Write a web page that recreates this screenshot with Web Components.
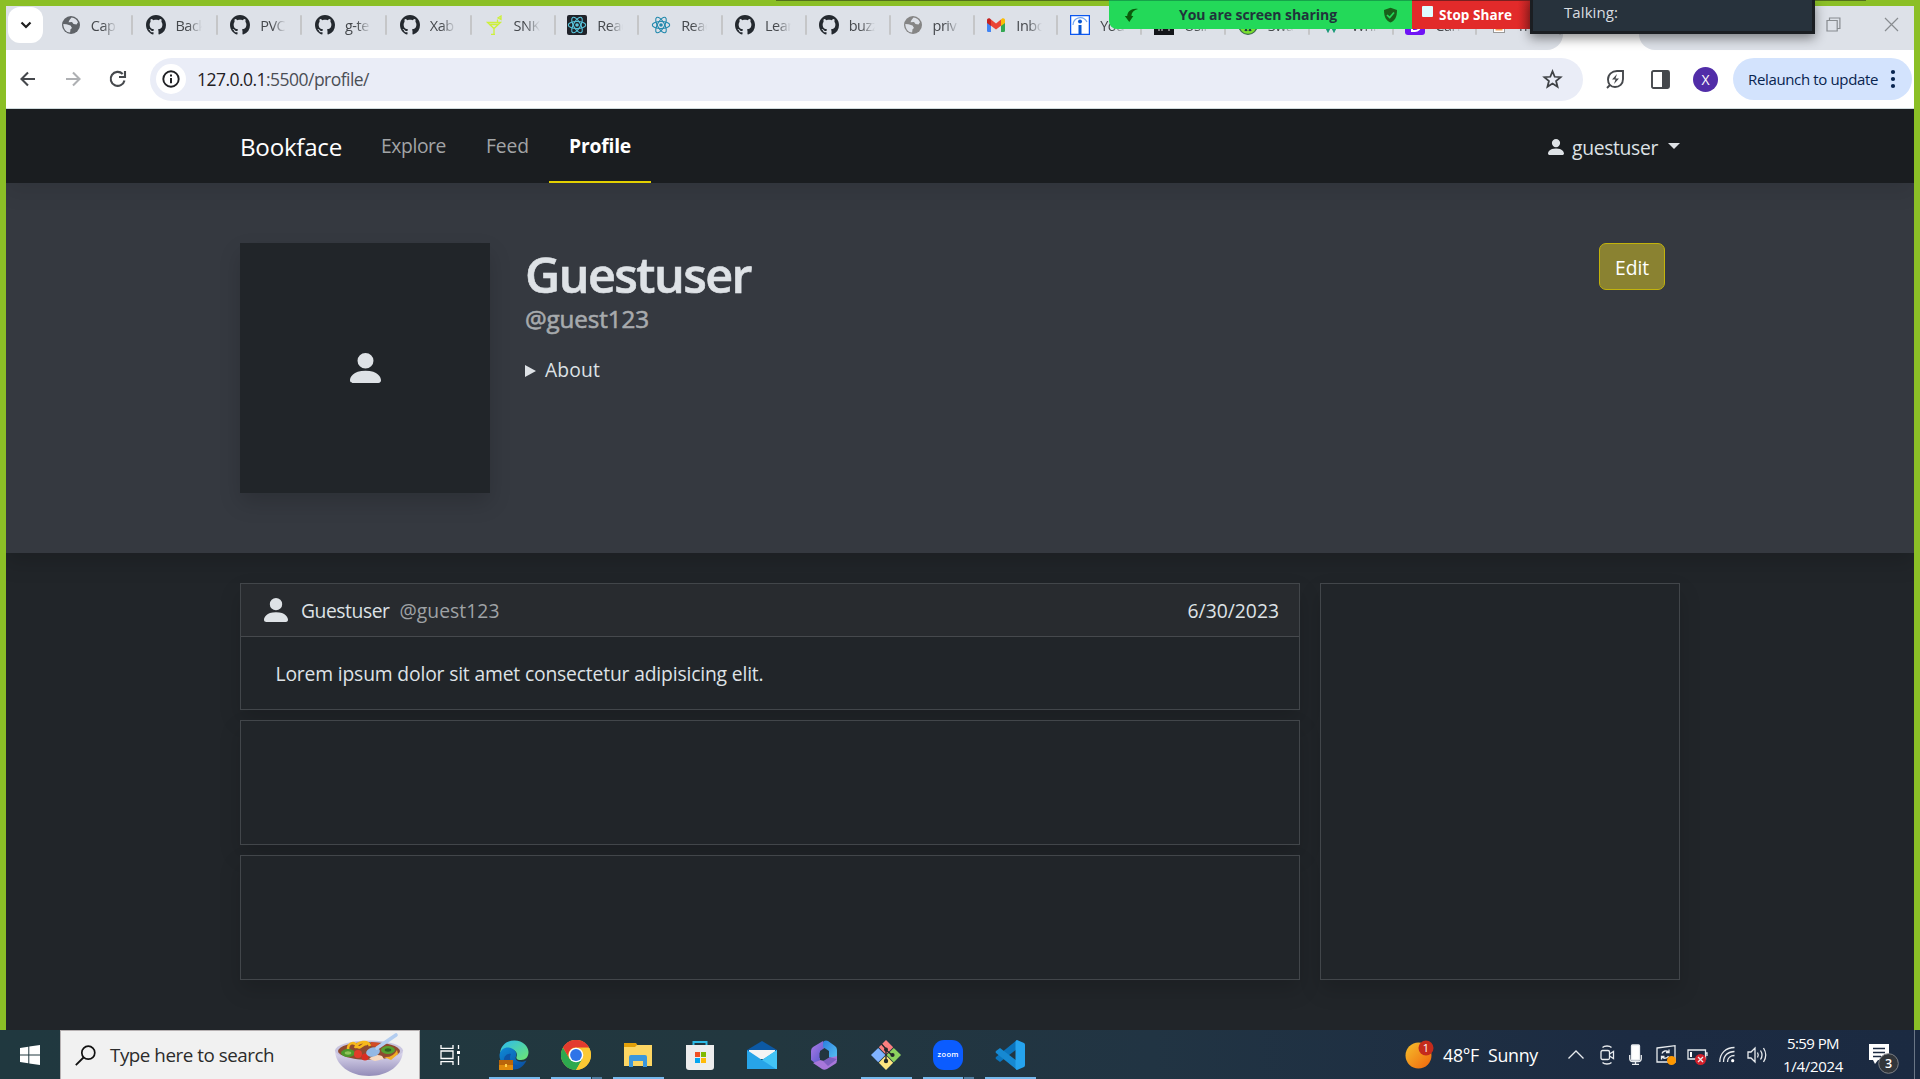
<!DOCTYPE html>
<html lang="en">
<head>
<meta charset="utf-8">
<title>Bookface - Profile</title>
<style>
html,body{margin:0;height:100%;overflow:hidden}
body{font-family:"Open Sans","Noto Sans",sans-serif;background:#212529}
</style>
</head>
<body>
<desk-top></desk-top>
<script>
const make = (name, html, after) => {
  const t = document.createElement('template');
  t.innerHTML = html;
  customElements.define(name, class extends HTMLElement {
    constructor() { super(); this.attachShadow({mode: 'open'}).append(t.content.cloneNode(true)); }
    connectedCallback() { if (after) after(this, this.shadowRoot); }
  });
};

make('desk-top', `
<style>:host{display:flex;flex-direction:column;width:1920px;height:1079px;position:relative;overflow:hidden}</style>
<browser-window></browser-window>
<task-bar></task-bar>
<share-overlay></share-overlay>`);

make('browser-window', `
<style>:host{display:flex;flex-direction:column;box-sizing:border-box;height:1030px;border:6px solid #8bbf26;border-bottom:0;background:#212529;overflow:hidden}</style>
<tab-strip></tab-strip><tool-bar></tool-bar><profile-page></profile-page>`);

/* Tab strip */
make('tab-strip', `
<style>
:host{display:flex;height:44px;background:#fff;flex:none}
.l{width:1557px;display:flex;background:#dde1e8;border-radius:0 0 16px 0;overflow:hidden}
.drop{width:35px;height:36px;margin:1px 5px 0 2px;background:#fff;border-radius:12px;display:grid;place-items:center;flex:none}
chrome-tab:nth-of-type(-n+5){width:84.750px}
.gap{width:76px;flex:none}
.r{width:275px;display:flex;justify-content:flex-end;align-items:flex-start;background:#dde1e8;border-radius:0 0 0 16px}
.r svg{margin-top:11px;fill:none;stroke:#888c90;stroke-width:1.2}
.a{margin-right:43px}.b{margin-right:15px}
</style>
<div class="l"><div class="drop"><svg width="12" height="8" viewBox="0 0 12 8"><path d="M1.5 1.5 6 6l4.500-4.500" fill="none" stroke="#1f1f1f" stroke-width="2.200"/></svg></div>
<chrome-tab icon="globe">Cap</chrome-tab><chrome-tab icon="github">Back</chrome-tab><chrome-tab icon="github">PVC</chrome-tab><chrome-tab icon="github">g-te</chrome-tab><chrome-tab icon="github">Xab</chrome-tab><chrome-tab icon="drink">SNK</chrome-tab><chrome-tab icon="reactd">Reac</chrome-tab><chrome-tab icon="react">Reac</chrome-tab><chrome-tab icon="github">Lear</chrome-tab><chrome-tab icon="github">buzz</chrome-tab><chrome-tab icon="globe2">priv</chrome-tab><chrome-tab icon="gmail">Inbo</chrome-tab><chrome-tab icon="info">You</chrome-tab><chrome-tab icon="black">Usin</chrome-tab><chrome-tab icon="lime">Swa</chrome-tab><chrome-tab icon="teal">Whit</chrome-tab><chrome-tab icon="purple">Can</chrome-tab><chrome-tab icon="photo">m</chrome-tab></div>
<div class="gap"></div>
<div class="r"><svg class="a" width="15" height="15" viewBox="0 0 15 15"><path d="M1 3.500h10.200V14H1zM3.500 3.500V1h10.400v10.500h-2.500"/></svg><svg class="b" width="15" height="15" viewBox="0 0 15 15"><path d="m1 1 13 13M14 1 1 14"/></svg></div>`);

const globe = c => `<svg viewBox="0 0 20 20"><circle cx="10" cy="10" r="9" fill="${c}"/><path d="M10.500 2.500c3 .2 5.500 2.200 6.500 4.800l-1.500 2.200-3-.5-1.500-2-3.500.3 1-2.300zM2.300 9l3.200.2 4 1.300 1.500 2.500-1.500 1.200-.4 3.300C5.500 17.500 2.300 14 2.300 9z" fill="#dde1e8"/></svg>`;
const atom = c => `<g fill="none" stroke="${c}" stroke-width="1.100"><ellipse cx="10" cy="10" rx="8.700" ry="3.500"/><ellipse cx="10" cy="10" rx="8.700" ry="3.500" transform="rotate(60 10 10)"/><ellipse cx="10" cy="10" rx="8.700" ry="3.500" transform="rotate(120 10 10)"/></g><circle cx="10" cy="10" r="1.800" fill="${c}"/>`;
const favicons = {
  globe: globe('#5f6368'), globe2: globe('#858585'),
  github: `<svg viewBox="0 0 16 16"><path fill="#24292f" d="M8 0C3.580 0 0 3.580 0 8c0 3.540 2.290 6.530 5.470 7.590.4.070.55-.17.55-.38 0-.19-.01-.82-.01-1.490-2.010.37-2.530-.49-2.690-.94-.09-.23-.48-.94-.82-1.130-.28-.15-.68-.52-.01-.53.63-.01 1.080.58 1.230.82.72 1.210 1.870.87 2.330.66.07-.52.28-.87.51-1.070-1.780-.2-3.640-.89-3.640-3.950 0-.87.31-1.590.82-2.150-.08-.2-.36-1.020.08-2.120 0 0 .67-.21 2.200.82.64-.18 1.320-.27 2-.27s1.360.09 2 .27c1.530-1.040 2.200-.82 2.200-.82.44 1.100.16 1.920.08 2.120.51.56.82 1.270.82 2.150 0 3.070-1.870 3.750-3.650 3.950.29.25.54.73.54 1.480 0 1.070-.01 1.930-.01 2.200 0 .21.15.46.55.38A8.010 8.010 0 0 0 16 8c0-4.420-3.580-8-8-8z"/></svg>`,
  drink: `<svg viewBox="0 0 20 20"><g fill="none" stroke="#cdf03c" stroke-width="1.300"><path d="M3.500 7.500h13L10 13.500zM10 13.500V19M7 19.500h4M5 9.500h9M13.500 7.500v-3M17 1l-3 2 3 1.500z"/></g></svg>`,
  reactd: `<svg viewBox="0 0 20 20"><rect width="20" height="20" rx="2" fill="#20232a"/>${atom('#58c4dc')}</svg>`,
  react: `<svg viewBox="0 0 20 20">${atom('#2289ad')}</svg>`,
  gmail: `<svg viewBox="0 0 20 20"><path fill="#4285f4" d="M1 7.500 5 10v7H2.300A1.300 1.300 0 0 1 1 15.700z"/><path fill="#34a853" d="M19 7.500 15 10v7h2.700a1.300 1.300 0 0 0 1.300-1.300z"/><path fill="#ea4335" d="M5 4.500v6.300l5 3.700 5-3.700V4.500l-5 3.900z"/><path fill="#c5221f" d="M1 5v3l4 3V4.500l-.8-.7C2.800 2.700 1 3.600 1 5z"/><path fill="#fbbc04" d="M19 5v3l-4 3V4.500l.8-.7C17.200 2.700 19 3.600 19 5z"/></svg>`,
  info: `<svg viewBox="0 0 20 20"><rect x=".6" y=".6" width="18.800" height="18.800" fill="#fff" stroke="#0b57f0" stroke-width="1.300"/><circle cx="10" cy="6.500" r="2" fill="#0b57d0"/><path d="M8.500 10h3v9h-3z" fill="#0b57d0"/><path d="M3 10c.5-8 10-10 14-3" fill="none" stroke="#79a9ef" stroke-width="1.200"/></svg>`,
  black: `<svg viewBox="0 0 20 20"><path fill="#14161a" d="M0 0h20v20H0z"/><path d="M5 12v4m3-4v4m7-4v4" stroke="#ddd"/></svg>`,
  lime: `<svg viewBox="0 0 20 20"><circle cx="10" cy="10" r="9.300" fill="#79e02d" stroke="#3b6b4c" stroke-width="1.200"/><path d="m7 16 1-2 1 2m2 0 1-2 1 2" stroke="#173647" fill="none" stroke-width="1.300"/></svg>`,
  teal: `<svg viewBox="0 0 20 20"><path d="m3 10 3 6 3-6 3 6 3-6" fill="none" stroke="#1c9b79" stroke-width="2"/></svg>`,
  purple: `<svg viewBox="0 0 20 20"><rect width="20" height="20" rx="3" fill="#6f13f5"/><path d="M7 5h3a5 5 0 0 1 0 11H7z" fill="none" stroke="#fff" stroke-width="2"/></svg>`,
  photo: `<svg viewBox="0 0 20 20"><rect x="4.500" y="3" width="11" height="14.500" fill="#fff" stroke="#999"/><path d="M6.500 8h7v7.500h-7z" fill="#f49b54"/></svg>`
};
make('chrome-tab', `
<style>
:host{display:flex;align-items:center;justify-content:flex-end;box-sizing:border-box;width:83.800px;height:38px;flex:none;font-size:14.500px;line-height:20px;color:#45484c}
.i{width:20px;height:20px;flex:none}.i svg{display:block;width:20px;height:20px}
.t{width:26px;margin:1px 14px 0 10px;white-space:nowrap;overflow:hidden;letter-spacing:-.5px;-webkit-mask:linear-gradient(90deg,#000 45%,transparent);mask:linear-gradient(90deg,#000 45%,transparent);flex:none}
.s{width:2px;height:20px;background:#c5c6c8;border-radius:1px;flex:none}
</style>
<span class="i"></span><span class="t"><slot></slot></span><span class="s"></span>`,
(h, r) => { r.querySelector('.i').innerHTML = favicons[h.getAttribute('icon')]; });

/* Toolbar */
make('tool-bar', `
<style>
:host{display:flex;align-items:center;height:59px;box-sizing:border-box;border-bottom:1px solid #d0dbdd;background:#fff;flex:none;padding-left:12px}
svg{display:block;flex:none}
.n{width:20px;margin-right:25px}.n3{margin-right:22px}
.omni{width:1433px;height:43px;border-radius:22px;background:#eaedf7;display:flex;align-items:center;box-sizing:border-box;padding:0 20px 0 6px;margin-right:21px;flex:none}
.c{width:30px;height:30px;border-radius:50%;background:#fff;display:grid;place-items:center;margin-right:11px}
.u{font-size:17.500px;line-height:24px;color:#4b4e55;flex:1}.u b{font-weight:400;color:#1f2023}
.av{width:25px;height:25px;border-radius:50%;background:#512da8;color:#fff;font-size:14px;line-height:25px;text-align:center;margin:0 15px 0 23px;flex:none}
.pill{width:179px;height:42px;border-radius:21px;background:#d3e3fd;display:flex;align-items:center;box-sizing:border-box;padding:0 13px 0 15px;justify-content:space-between;color:#08244f;font-size:15px;line-height:22px;flex:none}
.sp{width:25px;flex:none}
</style>
<svg class="n" width="20" height="20" viewBox="0 0 20 20"><path d="M17 10H4M10 3.500 3.500 10l6.500 6.500" fill="none" stroke="#45484c" stroke-width="2.100"/></svg>
<svg class="n" width="20" height="20" viewBox="0 0 20 20"><path d="M3 10h13M10 3.500l6.500 6.500-6.500 6.500" fill="none" stroke="#aeb0b3" stroke-width="2.100"/></svg>
<svg class="n n3" width="20" height="20" viewBox="0 0 20 20"><path d="M16.500 11.500A7 7 0 1 1 14.700 5M17 2v6h-6" fill="none" stroke="#45484c" stroke-width="2.100"/></svg>
<div class="omni"><div class="c"><svg width="20" height="20" viewBox="0 0 20 20"><circle cx="10" cy="10" r="7.700" fill="none" stroke="#202124" stroke-width="1.900"/><path d="M10 9v5.200M10 5.500v2" stroke="#202124" stroke-width="2"/></svg></div>
<div class="u"><fit-text w="172"><b>127.0.0.1</b>:5500/profile/</fit-text></div>
<svg width="21" height="21" viewBox="0 0 20 20"><path d="m10 2.200 2.100 5.200 5.600.4-4.300 3.600 1.400 5.500L10 13.900l-4.800 3 1.400-5.500L2.300 7.800l5.600-.4z" fill="none" stroke="#3f4246" stroke-width="1.700"/></svg></div>
<svg width="22" height="22" viewBox="0 0 22 22"><path d="M19 3v8c0 5-3.500 8-8 8-4.300 0-7-3-7-7.500C4 6.300 8 3.200 13 3zM6 17l-3 3" fill="none" stroke="#45484c" stroke-width="1.900"/><path d="m13 6-5 5.500h3.500L10 16l5-5.500h-3.500z" fill="#45484c"/></svg>
<div class="sp"></div>
<svg width="19" height="19" viewBox="0 0 19 19"><rect x="1" y="1" width="17" height="17" rx="1.500" fill="#fff" stroke="#45484c" stroke-width="1.900"/><path d="M11 1h7v17h-7z" fill="#45484c"/></svg>
<div class="av">X</div>
<div class="pill"><fit-text w="130">Relaunch to update</fit-text><svg width="12" height="20" viewBox="0 0 12 20" fill="#08244f"><circle cx="6" cy="3" r="2.100"/><circle cx="6" cy="10" r="2.100"/><circle cx="6" cy="17" r="2.100"/></svg></div>`);

/* Profile page */
make('profile-page', `
<style>:host{display:block;flex:1;background:#212529;color:#dee2e6;overflow:hidden;font-size:19.300px;line-height:30px}
.main{display:flex;gap:20px;padding:30px 234px 0;align-items:stretch;height:397px}
.feed{display:flex;flex-direction:column;gap:10px;width:1060px}
</style>
<nav-bar></nav-bar>
<profile-hero></profile-hero>
<div class="main"><div class="feed"><post-card><fit-text w="488">Lorem ipsum dolor sit amet consectetur adipisicing elit.</fit-text></post-card><blank-card style="height:125px"></blank-card><blank-card style="height:125px"></blank-card></div><blank-card style="width:360px;height:397px"></blank-card></div>`);

make('user-icon', `
<style>:host{display:inline-block;width:24px;height:24px;flex:none}svg{display:block;width:100%;height:100%}</style>
<svg viewBox="1.500 1 13 13" preserveAspectRatio="none"><path fill="#dee2e6" d="M2.700 14s-1.200 0-1.200-1.200S2.700 8.700 8 8.700s6.500 2.900 6.500 4.100S13.300 14 13.300 14zM8 7.700A3.350 3.350 0 1 0 8 1a3.350 3.350 0 0 0 0 6.700z"/></svg>`);

make('nav-bar', `
<style>
:host{display:flex;align-items:center;height:74px;background:#1a1d20;padding:0 234px;position:relative;z-index:2;box-shadow:0 10px 20px rgba(0,0,0,.08)}
.brand{font-size:24.200px;color:#fff;margin-right:19px;padding-top:1px}
nav{display:flex;height:74px;line-height:74px;color:#a2a4a6}
nav span{padding:0 20px;box-sizing:border-box}
nav .on{color:#fff;font-weight:700;border-bottom:2px solid #e3d000;width:102px}
.user{margin-left:auto;display:flex;align-items:center;padding-top:2px}
.user fit-text{margin-top:1px}
user-icon{width:16px;height:16px;margin-right:8px}
.car{border:6px solid transparent;border-top-color:#dee2e6;border-bottom:0;margin:-3px 0 0 10px}
</style>
<div class="brand"><fit-text w="102">Bookface</fit-text></div>
<nav><span><fit-text w="65">Explore</fit-text></span><span><fit-text w="43">Feed</fit-text></span><span class="on"><fit-text w="62">Profile</fit-text></span></nav>
<div class="user"><user-icon></user-icon><fit-text w="86">guestuser</fit-text><i class="car"></i></div>`);

make('profile-hero', `
<style>
:host{display:flex;align-items:flex-start;height:370px;box-sizing:border-box;padding:60px 234px;background:#353940;position:relative;box-shadow:0 10px 20px rgba(0,0,0,.15)}
.pic{width:250px;height:250px;background:#212529;box-shadow:0 10px 20px rgba(0,0,0,.15);display:grid;place-items:center;margin-right:35px}
.pic user-icon{width:31px;height:30px}
h1{font-size:48.500px;line-height:60px;font-weight:600;-webkit-text-stroke:.6px #dee2e6;margin:1px 0 0}
h4{font-size:24.200px;line-height:30px;font-weight:400;-webkit-text-stroke:.6px #a7aaad;margin:0;color:#a7aaad}
.about{margin-top:21px;display:flex;align-items:center}
.tri{border:6.500px solid transparent;border-left:11px solid #dee2e6;border-right:0;margin:1px 9px 0 0}
.edit{margin:0 15px 0 auto;width:66px;height:47px;box-sizing:border-box;border:1px solid #c2b30c;border-radius:7px;background:#8a8231;color:#fff;line-height:48px;text-align:center}
</style>
<div class="pic"><user-icon></user-icon></div>
<div><h1><fit-text w="226">Guestuser</fit-text></h1><h4><fit-text w="124">@guest123</fit-text></h4><div class="about"><i class="tri"></i><fit-text w="55">About</fit-text></div></div>
<div class="edit"><fit-text w="34">Edit</fit-text></div>`);

make('blank-card', `
<style>:host{display:block;box-sizing:border-box;border:1px solid #42464a;background:#212529;box-shadow:0 10px 20px rgba(0,0,0,.15);flex:none}</style><slot></slot>`);

make('post-card', `
<style>
:host{display:block;box-sizing:border-box;height:127px;border:1px solid #42464a;background:#212529;box-shadow:0 10px 20px rgba(0,0,0,.15);flex:none}
header{display:flex;align-items:center;height:52px;padding:0 20px 0 23px;background:#282b2f;border-bottom:1px solid #46494d}
.n{margin:2px 10px 0 13px}.h{color:#9fa2a5;margin-top:2px}.d{margin:2px 0 0 auto}
.b{padding:0 34.500px;line-height:74px}
</style>
<header><user-icon></user-icon><fit-text class="n" w="88.500">Guestuser</fit-text><fit-text class="h" w="100">@guest123</fit-text><fit-text class="d" w="91.500">6/30/2023</fit-text></header>
<div class="b"><slot></slot></div>`);

/* Screen-share overlay */
make('share-overlay', `
<style>
:host{position:absolute;left:776px;top:0;width:1090px;height:34px;box-sizing:border-box;border-top:1px solid #55701c;padding-left:333px;display:flex;align-items:flex-start;font-weight:700}
.g{width:303px;background:#23d959;border-radius:0 0 0 8px;display:flex;align-items:center;box-sizing:border-box;padding:0 14px 0 15px;color:#20343b;font-size:14px;line-height:28px;border-top:1px solid #16a34a;margin-top:-1px;height:29px}
.g fit-text{margin:0 auto 0 40px}
.r{width:118px;height:29px;margin-top:-1px;border-top:1px solid #7a1f1f;box-sizing:border-box;background:linear-gradient(90deg,#e22a2a 90%,#b92424);display:flex;padding:5px 0 0 10px;color:#fff;font-size:13.500px;line-height:18px}
.r i{width:11px;height:11px;background:#dffcff;border-radius:1px;margin-right:6px}
.t{width:285px;height:34px;box-sizing:border-box;margin-top:-1px;border:3px solid #1b1e22;border-top:0;background:#27323c;color:#d9dde0;font-weight:400;font-size:15px;line-height:24px;padding-left:31px;box-shadow:0 4px 12px rgba(0,0,0,.45)}
</style>
<div class="g"><svg width="15" height="15" viewBox="0 0 15 15"><path d="M14 1C8 0 3.500 3 3.200 8L.8 8l4.500 6 4-6H7.500C7.500 4.500 10 2 14 1z" fill="#0b5a0b"/></svg><fit-text w="158">You are screen sharing</fit-text><svg width="15" height="16" viewBox="0 0 15 16"><path d="M7.500.8 14 3c0 7-2 10.500-6.500 12.500C3 13.500 1 10 1 3z" fill="#195f1a"/><path d="m4 8 2.700 2.500L11 5.500" stroke="#23d959" stroke-width="1.700" fill="none"/></svg></div>
<div class="r"><i></i><fit-text w="73">Stop Share</fit-text></div>
<div class="t"><fit-text w="54">Talking:</fit-text></div>`);

/* Taskbar */
const G = (id, a, b) => `<linearGradient id="${id}" x1="0" y1="0" x2="1" y2="1"><stop stop-color="${a}"/><stop offset="1" stop-color="${b}"/></linearGradient>`;
const apps = {
  edge: `<defs>${G('a', '#2bb9f2', '#6ee86f')}${G('b', '#0f8ad8', '#0a4a9c')}</defs><path d="M1 13C2 5 8 .5 15.500.5 24 .5 29.500 6.500 29.500 12c0 5-3 8-7.500 8-3.500 0-5-1-4.500-3 2-6-4-9-9-7-4 1-7 2-7.500 3z" fill="url(#a)"/><path d="M.5 15c1-7 8-9 12.500-6.500 4 2 5 5 4 8-2 4 4 7 10.500 4-3 6-7.500 9-12.500 9C6 29.500.5 23 .5 15z" fill="url(#b)"/><path d="M12 14c-3 5 1 12 9 12-7 5-14 2-16-4-1-5 3-9 7-8z" fill="#0d55a8"/><path d="M0 20h14v10H0z" fill="#e08a0c"/><path d="M0 20h14v5H0z" fill="#b9650b"/><path d="M6 24h2v3H6z" fill="#ffd04a"/>`,
  chrome: `<circle cx="15" cy="15" r="15" fill="#fbc02d"/><path d="M2 7.500A15 15 0 0 0 15 30l6.500-11.300L8.500 18.700z" fill="#2da94f"/><path d="M15 30l6.500-11.300L21.500 8H28.300A15 15 0 0 1 15 30z" fill="#fbc934"/><path d="M2 7.500 8.600 19A7.400 7.400 0 0 1 15 7.500h13.100A15 15 0 0 0 2 7.500z" fill="#e33b2e"/><circle cx="15" cy="15" r="7.300" fill="#fff"/><circle cx="15" cy="15" r="5.900" fill="#2f74e8"/>`,
  folder: `<path d="M1 3h12l2 3h11v6H1z" fill="#e3a008"/><path d="M1 7h11l2-2h15v21H1z" fill="#fdd663"/><path d="M6 27V17q0-2 2-2h14q2 0 2 2v10h-4v-6h-10v6z" fill="#3c97dc"/>`,
  store: `<path d="M8.500 7V2h13v5" fill="none" stroke="#2ebbe6" stroke-width="2"/><path d="M1 5h28v22q0 3-3 3H4q-3 0-3-3z" fill="#ededed"/><path d="M10 12h5v5h-5z" fill="#f05125"/><path d="M16 12h5v5h-5z" fill="#7fba00"/><path d="M10 18h5v5h-5z" fill="#05a6f0"/><path d="M16 18h5v5h-5z" fill="#ffba08"/>`,
  mail: `<path d="M0 10 15 1l15 9v2H0z" fill="#0c59a4"/><path d="M2 10h26v9H2z" fill="#f4f4f4"/><path d="M0 10l15 10 15-10v19H0z" fill="#27a4e8"/><path d="M30 10 15 20l14 9h1z" fill="#43c4f5"/>`,
  m365: `<defs>${G('c', '#b07be8', '#4b55c8')}${G('d', '#2b7de0', '#59c6f2')}</defs><path d="M14 1 4 7Q2 8.500 2 11v9l4 3 5-3V11l6-4z" fill="url(#c)"/><path d="M15 1q2-1 4 0l7 5q2 1.500 2 4v11l-8-4v-6l-6-4V3z" fill="url(#d)"/><path d="M28 16v4q0 3-2 4l-8 5q-3 1.500-5 0L4 23l7-3 4 1 5-3z" fill="#a877da"/><path d="m20 17 8 2-9 7-5-5z" fill="#7f5fc0"/><path d="m15 10 5 2.800v4.700L15 20.500l-4.500-2.800v-5z" fill="#22363f"/>`,
  git: `<path d="M15 0 22.200 7.200 15 14.400 7.800 7.200z" fill="#fb7f7f"/><path d="m7.200 7.900 7.200 7.100-7.200 7.200L0 15z" fill="#80b3ff"/><path d="m22.800 7.900 7.200 7.100-7.200 7.200-7.200-7.200z" fill="#8dd35f"/><path d="m15 15.600 7.200 7.200L15 30l-7.200-7.200z" fill="#ffe680"/><path d="M10.500 4 15 9v12M15 10l6 5" fill="none" stroke="#22282b" stroke-width="1.400"/><g fill="#22282b"><circle cx="15" cy="9.500" r="2"/><circle cx="15" cy="21" r="2.200"/><circle cx="21.500" cy="15" r="2.100"/></g>`,
  zoom: `<rect width="30" height="30" rx="11" fill="#0b5cff"/><text x="15" y="17" text-anchor="middle" font-family="Open Sans" font-size="7.500" font-weight="600" fill="#fff" textLength="21">zoom</text>`,
  code: `<path d="M22 0v9L5 22l-4-3q-1-1 0-2z" fill="#0b74bd"/><path d="M22 30v-9L5 8l-4 3q-1 1 0 2z" fill="#1689d2"/><path d="m22 0 7 3q1 .5 1 2v20q0 1.500-1 2l-7 3q-1.500-.5-1.500-2V2q0-1.500 1.500-2z" fill="#25a3ee"/>`
};
make('task-app', `
<style>:host{display:flex;flex-direction:column;justify-content:flex-end;align-items:center;width:62px;height:49px;flex:none}
svg{display:block;margin-bottom:7px}
.u{height:2px;width:51px;display:flex;gap:1px}.u i{flex:1}.u i+i{flex:0 0 10px}
:host([run]) .u i{background:#76b9ed}:host([run="1"]) .u i+i{display:none}:host([run="2"]) .u i+i{background:#517fa3}</style>
<svg width="30" height="30" viewBox="0 0 30 30"></svg><div class="u"><i></i><i></i></div>`,
(h, r) => { r.querySelector('svg').innerHTML = apps[h.getAttribute('app')]; });

make('soup-bowl', `
<style>:host{display:block}svg{display:block}</style>
<svg width="70" height="45" viewBox="0 0 70 45"><defs><linearGradient id="w" x1="0" y1="0" x2="0" y2="1"><stop stop-color="#e4e0f4"/><stop offset="1" stop-color="#938cb8"/></linearGradient></defs>
<path d="M1 18c0 15 15 26 34 26s34-11 34-26z" fill="url(#w)"/><ellipse cx="35" cy="18.500" rx="34" ry="10" fill="#c9c5e0"/><ellipse cx="35" cy="19" rx="31" ry="8.800" fill="#8f4a30"/>
<g fill="none" stroke="#f6b81c" stroke-width="2.600"><path d="M14 17c0-6 6-8 9-3s7-5 10-1M21 16c3-7 13-8 15-2"/></g><ellipse cx="14" cy="21" rx="7" ry="4" fill="#4e982c"/><ellipse cx="14" cy="21" rx="3.300" ry="1.700" fill="#8fc45a"/><ellipse cx="54" cy="18" rx="7" ry="4" fill="#57a02f"/><ellipse cx="54" cy="18" rx="3.300" ry="1.700" fill="#2f6420"/><path d="M37 10l9 1-3 4-6-1z" fill="#d24b25"/><circle cx="24" cy="22" r="4" fill="#e23b2a"/><circle cx="31" cy="25" r="3.500" fill="#d92d22"/><path d="M35 27q6-6 13-3l2 3-9 2z" fill="#f7d9bf"/><path d="M50 25q9 1 13-7l1 4-7 6z" fill="#f1ad24"/><ellipse cx="39" cy="20" rx="7" ry="4.500" transform="rotate(-12 39 20)" fill="#93b8e4"/><path d="M43 16 62 3" stroke="#b3cdf0" stroke-width="3.600" stroke-linecap="round"/></svg>`);

make('task-bar', `
<style>
:host{display:flex;align-items:center;height:49px;flex:none;background:linear-gradient(90deg,#20383f 0,#22373f 40%,#213443 60%,#1c2b42 85%,#1b2a41);color:#fff;font-size:17.800px;line-height:24px}
svg{display:block;flex:none}
.st{width:60px;padding-left:20px;box-sizing:border-box;flex:none}
.se{width:360px;height:49px;box-sizing:border-box;border:1px solid #b6b1b2;border-bottom:0;background:#f1f1f1;display:flex;align-items:center;color:#2b2b2b;font-size:18.800px;padding:0 15px 0 14px;flex:none}
.se fit-text{margin:0 auto 0 14px}
.se soup-bowl{margin-top:-1px}
.tv{margin:0 22px 0 20px}
.w{display:flex;align-items:center;margin-left:auto}
.tray{display:flex;align-items:center;fill:none;stroke:#e8ebee;stroke-width:1.300}
.tray svg{overflow:visible}
.ck{width:60px;text-align:center;font-size:15px;line-height:23px;margin:0 26px 0 16px;white-space:nowrap}
.end{width:6px;height:49px;box-sizing:border-box;border-left:1px solid #6a7685;margin-left:14px}
svg text{fill:#fff;stroke:none;font-family:"Open Sans";text-anchor:middle}
</style>
<div class="st"><svg width="20" height="20" viewBox="0 0 20 20" fill="#fff"><path d="M0 3l8.300-1.200v7.700H0zM9.300 1.600 20 0v9.500H9.300zM0 10.500h8.300v7.700L0 17zM9.300 10.500H20V20L9.300 18.400z"/></svg></div>
<div class="se"><svg width="21" height="21" viewBox="0 0 21 21"><path d="M.8 20.200 8.500 12.500" stroke="#111" stroke-width="1.800"/><circle cx="13.300" cy="7.700" r="6.500" fill="none" stroke="#111" stroke-width="1.700"/></svg><fit-text w="164">Type here to search</fit-text><soup-bowl></soup-bowl></div>
<svg class="tv" width="21" height="20" viewBox="0 0 21 20" fill="none" stroke="#fff" stroke-width="1.300"><path d="M1 0v3.300h12V0M1 20v-3.300h12V20M1 6h12v7.500H1zM18.500 0v4m0 7v9"/><path d="M17 6h3v3h-3z" fill="#fff" stroke="none"/></svg>
<task-app app="edge" run="1"></task-app><task-app app="chrome" run="2"></task-app><task-app app="folder" run="1"></task-app><task-app app="store"></task-app><task-app app="mail"></task-app><task-app app="m365"></task-app><task-app app="git" run="1"></task-app><task-app app="zoom" run="2"></task-app><task-app app="code" run="1"></task-app>
<div class="w"><svg width="29" height="29" viewBox="0 0 29 29" style="margin-right:9px"><defs>${G('s', '#f5c02c', '#f0640c')}</defs><circle cx="13.500" cy="15.500" r="13" fill="url(#s)"/><circle cx="21" cy="8" r="7.500" fill="#c42b1c"/><text x="21" y="12" font-size="11">1</text></svg><fit-text w="36">48°F</fit-text><span style="width:9px"></span><fit-text w="50">Sunny</fit-text></div>
<div class="tray">
<svg width="16" height="9" viewBox="0 0 16 9" style="margin:0 16px 0 30px"><path d="m.5 8.500 7.500-7.500 7.500 7.500"/></svg>
<svg width="14" height="20" viewBox="0 0 14 20" style="margin-right:15px"><rect x="1" y="5.500" width="8.500" height="9" rx="1.500"/><path d="m9.500 9 4-2.500v7l-4-2.500M2.500 2.500c2-2 7-2 9 0M2.500 17.500c2 2 7 2 9 0"/></svg>
<svg width="13" height="20" viewBox="0 0 13 20" style="margin-right:14px"><rect x="2.500" y="0" width="8" height="15" rx="1" fill="#fff"/><path d="M.7 10v3.500q0 3 3 3h5.600q3 0 3-3V10M6.500 16.500v3M3 19.400h7"/></svg>
<svg width="20" height="20" viewBox="0 0 20 20" style="margin-right:11px"><path d="M1 3 19 .7V17H1z"/><path d="M6 8.500a4 4 0 0 1 6.500-1.500M13 4.500V7.500h-3M12.500 11A4 4 0 0 1 6 12M5.500 14.500v-3h3"/><circle cx="15.500" cy="15.500" r="4.500" fill="#ff9800" stroke="none"/></svg>
<svg width="20" height="20" viewBox="0 0 20 20" style="margin-right:12px"><path d="M1 5h17.500v9H1z"/><path d="M3 7h2v5H3z" fill="#fff" stroke="none"/><path d="M18.500 8h1.500v3"/><circle cx="13.500" cy="14.500" r="5.500" fill="#d3202b" stroke="none"/><path d="m11 12 5 5m0-5-5 5"/></svg>
<svg width="16" height="17" viewBox="0 0 16 17" style="margin-right:12px"><path d="M.8 16C.8 7 7 1.500 15.500 1.500M4.500 16C4.500 9.500 9 5.500 15.500 5.500M8.500 16c0-4 3-6.500 7-6.500"/><circle cx="13.700" cy="14.700" r="1.600" fill="#fff" stroke="none"/></svg>
<svg width="20" height="18" viewBox="0 0 20 18"><path d="M1 6h3l4-4v14l-4-4H1zM10.500 6.500q1.500 2.500 0 5M13.500 4.500q3 4.500 0 9M16.500 2q4.500 7 0 14"/></svg>
</div>
<div class="ck"><fit-text w="52">5:59 PM</fit-text><br><fit-text w="60">1/4/2024</fit-text></div>
<svg width="31" height="32" viewBox="0 0 31 32" style="margin-top:8px"><path d="M0 1h20v16H9l-3 4-2-4H0z" fill="#fff"/><path d="M4 5.500h12M4 9.500h12M4 13.500h8" stroke="#1c2a42" stroke-width="1.300"/><circle cx="19.500" cy="20.500" r="9.800" fill="#32363b" stroke="#7d8085"/><text x="19.500" y="25" font-size="12.500" font-weight="600">3</text></svg>
<div class="end"></div>`);

/* Text run whose tracking is set so that it spans the width in its "w" attribute. Defined last, once every host is in the tree. */
make('fit-text', `<style>:host{display:inline-block;white-space:nowrap}</style><slot></slot>`, h => {
  const w = +h.getAttribute('w'), n = [...h.textContent].length;
  h.style.letterSpacing = ((w - h.getBoundingClientRect().width) / n).toFixed(3) + 'px';
});
</script>
</body>
</html>
